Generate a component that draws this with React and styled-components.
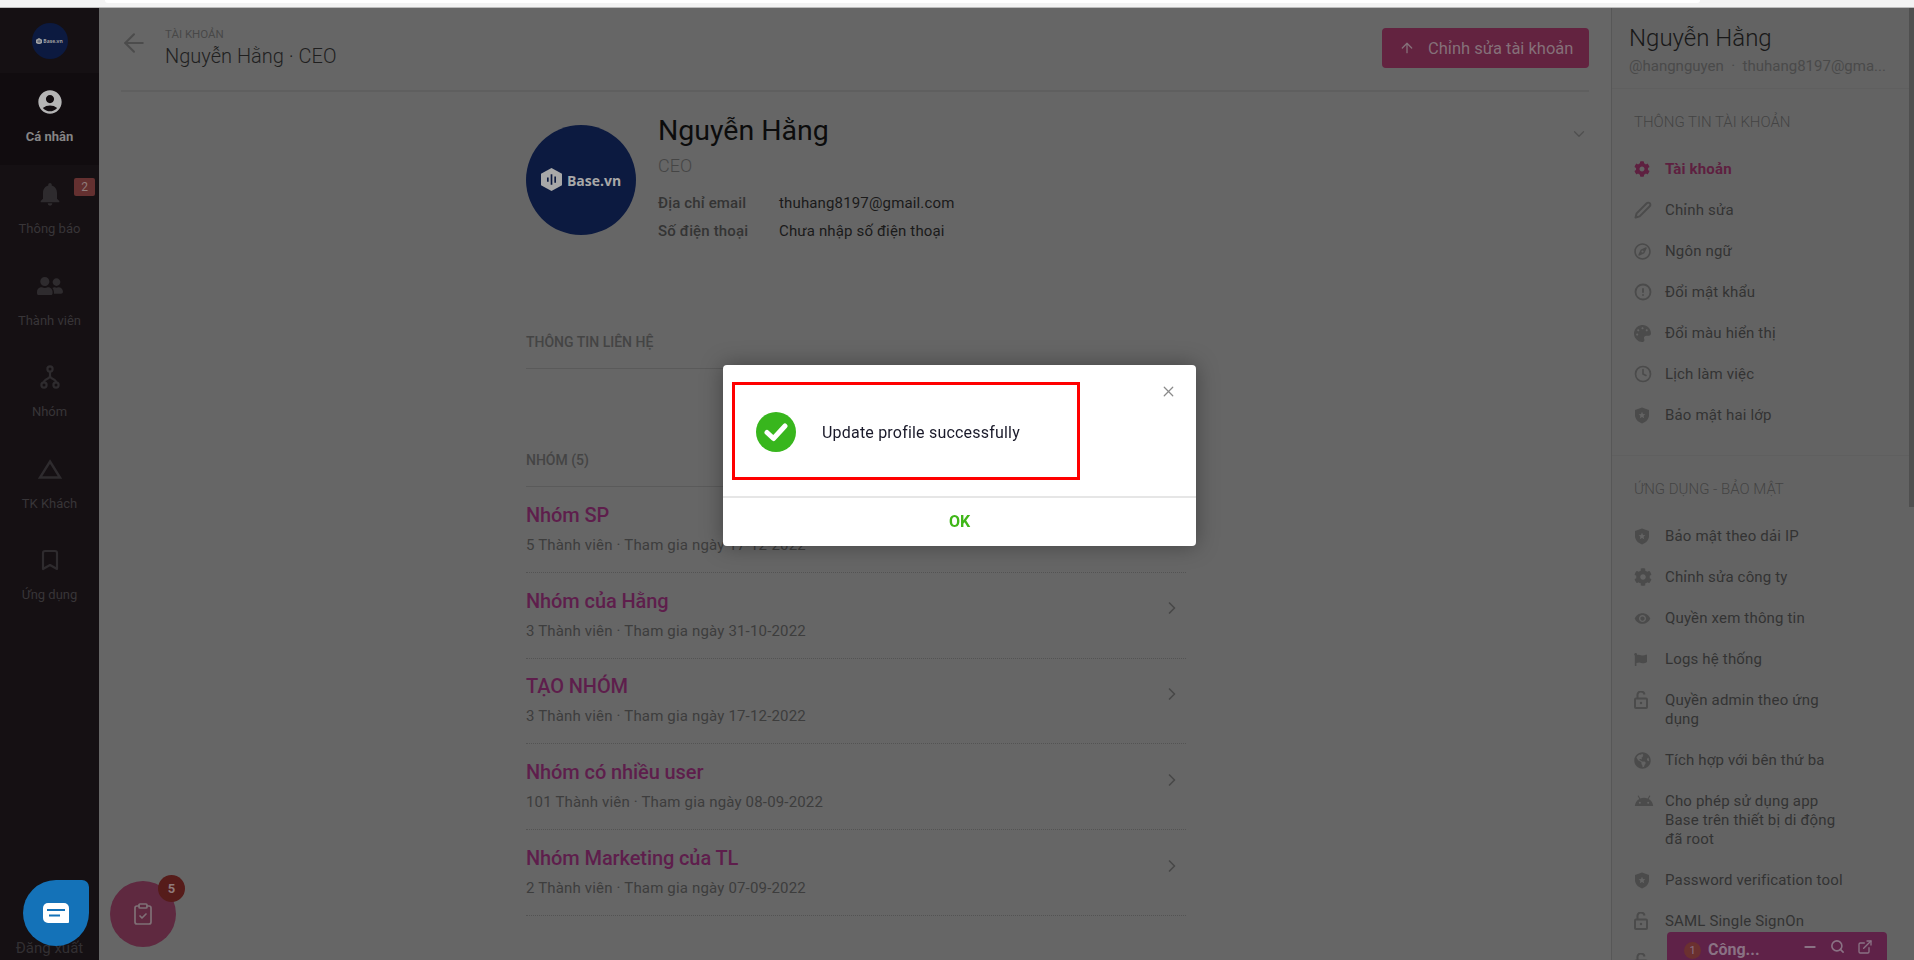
import styled, { createGlobalStyle } from 'styled-components'
import { ArrowLeft, ArrowUp, Bookmark, ChevronDown, ChevronRight, ClipboardCheck, ExternalLink, Minus, Search, X } from 'lucide-react'
import { FaCog, FaFlag, FaGlobeAmericas, FaPalette, FaRegCompass, FaUserFriends } from 'react-icons/fa'
import { FiAlertCircle, FiClock, FiEdit2 } from 'react-icons/fi'
import { MdAccountCircle, MdAndroid, MdNotifications, MdVisibility } from 'react-icons/md'

const GlobalStyle = createGlobalStyle`
    html, body {
        margin: 0;
        height: 100%;
        overflow: hidden;
        background: #666;
        font-family: Roboto, "Noto Sans", sans-serif;
    }

    * {
        box-sizing: border-box;
    }
`

const ShieldIcon = () => (
    <svg width="16" height="17" viewBox="0 0 16 17" fill="currentColor">
        <path d="M8 0.5 L15 3 V8 C15 12 12 15 8 16.5 C4 15 1 12 1 8 V3 Z" />
        <path fill="#636363" d="M8 4.8 l1 2.2 2.4.2-1.8 1.6.6 2.4L8 10l-2.2 1.2.6-2.4-1.8-1.6 2.4-.2z" />
    </svg>
)

const LockOpenIcon = () => (
    <svg width="14" height="18" viewBox="0 0 14 18" fill="none" stroke="currentColor" strokeWidth="2">
        <rect x="1" y="7.5" width="12" height="9.5" rx="1" />
        <path d="M3.5 7.5 V4.5 A3.5 3.5 0 0 1 10.5 3.5" />
        <circle cx="7" cy="12" r="1.2" fill="currentColor" stroke="none" />
    </svg>
)

const TreeIcon = () => (
    <svg width="20" height="24" viewBox="0 0 20 24" fill="none" stroke="currentColor" strokeWidth="2.2">
        <circle cx="10" cy="4" r="2.6" />
        <circle cx="4" cy="20" r="2.6" />
        <circle cx="16" cy="20" r="2.6" />
        <path d="M10 7 V11 M10 11 C10 14 4 14 4 17 M10 11 C10 14 16 14 16 17" />
    </svg>
)

const TriangleIcon = () => (
    <svg width="24" height="20" viewBox="0 0 24 20" fill="none" stroke="currentColor" strokeWidth="2.4">
        <path d="M12 2.5 L22 18.5 H2 Z" />
    </svg>
)

const HexIcon = ({ size, bar, fill }) => (
    <svg width={size} height={size * 1.1} viewBox="0 0 20 22">
        <path fill={fill} d="M10 0 L20 5.5 V16.5 L10 22 L0 16.5 V5.5 Z" />
        <path stroke={bar} strokeWidth="1.6" d="M6.5 9 V13 M10 6 V16 M13.5 8 V14" />
    </svg>
)

const navItems = [
    { label: 'Cá nhân', icon: <MdAccountCircle size={28} />, active: true },
    { label: 'Thông báo', icon: <MdNotifications size={28} />, badge: 2 },
    { label: 'Thành viên', icon: <FaUserFriends size={26} /> },
    { label: 'Nhóm', icon: <TreeIcon /> },
    { label: 'TK Khách', icon: <TriangleIcon /> },
    { label: 'Ứng dụng', icon: <Bookmark size={24} strokeWidth={2.2} /> },
]

const accountItems = [
    { label: 'Tài khoản', icon: <FaCog size={16} />, active: true },
    { label: 'Chỉnh sửa', icon: <FiEdit2 size={18} strokeWidth={2.6} /> },
    { label: 'Ngôn ngữ', icon: <FaRegCompass size={17} /> },
    { label: 'Đổi mật khẩu', icon: <FiAlertCircle size={18} strokeWidth={2.4} /> },
    { label: 'Đổi màu hiển thị', icon: <FaPalette size={17} /> },
    { label: 'Lịch làm việc', icon: <FiClock size={18} strokeWidth={2.2} /> },
    { label: 'Bảo mật hai lớp', icon: <ShieldIcon /> },
]

const appItems = [
    { label: 'Bảo mật theo dải IP', icon: <ShieldIcon /> },
    { label: 'Chỉnh sửa công ty', icon: <FaCog size={18} /> },
    { label: 'Quyền xem thông tin', icon: <MdVisibility size={17} /> },
    { label: 'Logs hệ thống', icon: <FaFlag size={13} /> },
    { label: 'Quyền admin theo ứng dụng', icon: <LockOpenIcon /> },
    { label: 'Tích hợp với bên thứ ba', icon: <FaGlobeAmericas size={17} /> },
    { label: 'Cho phép sử dụng app Base trên thiết bị di động đã root', icon: <MdAndroid size={20} /> },
    { label: 'Password verification tool', icon: <ShieldIcon /> },
    { label: 'SAML Single SignOn', icon: <LockOpenIcon /> },
    { label: '', icon: <LockOpenIcon /> },
]

const groups = [
    { name: 'Nhóm SP', meta: '5 Thành viên · Tham gia ngày 17-12-2022' },
    { name: 'Nhóm của Hằng', meta: '3 Thành viên · Tham gia ngày 31-10-2022' },
    { name: 'TẠO NHÓM', meta: '3 Thành viên · Tham gia ngày 17-12-2022' },
    { name: 'Nhóm có nhiều user', meta: '101 Thành viên · Tham gia ngày 08-09-2022' },
    { name: 'Nhóm Marketing của TL', meta: '2 Thành viên · Tham gia ngày 07-09-2022' },
]

const App = () => {
    return (
        <PageStyled>
            <GlobalStyle />
            <TopStrip><TopTab /></TopStrip>
            <Shell>
                <Sidebar>
                    <LogoArea>
                        <SmallLogo>
                            <HexIcon size={6} bar="#0c1a40" fill="#a0a0a0" />
                            <span>Base.vn</span>
                        </SmallLogo>
                    </LogoArea>
                    {navItems.map((item) => (
                        <NavItem key={item.label} $active={item.active}>
                            {item.icon}
                            <NavLabel $active={item.active}>{item.label}</NavLabel>
                            {item.badge ? <NavBadge>{item.badge}</NavBadge> : null}
                        </NavItem>
                    ))}
                    <Logout>Đăng xuất</Logout>
                </Sidebar>

                <Main>
                    <Header>
                        <BackArrow><ArrowLeft size={30} strokeWidth={1.6} /></BackArrow>
                        <HeaderTitle>
                            <small>TÀI KHOẢN</small>
                            <strong>Nguyễn Hằng · CEO</strong>
                        </HeaderTitle>
                        <EditButton>
                            <ArrowUp size={16} strokeWidth={2} />
                            Chỉnh sửa tài khoản
                        </EditButton>
                    </Header>

                    <Content>
                        <Profile>
                            <Avatar>
                                <HexIcon size={21} bar="#0c1a40" fill="#a8a8a8" />
                                <span>Base.vn</span>
                            </Avatar>
                            <ProfileInfo>
                                <ProfileName>Nguyễn Hằng</ProfileName>
                                <ProfileRole>CEO</ProfileRole>
                                <InfoRow><label>Địa chỉ email</label><span>thuhang8197@gmail.com</span></InfoRow>
                                <InfoRow><label>Số điện thoại</label><span>Chưa nhập số điện thoại</span></InfoRow>
                            </ProfileInfo>
                            <ProfileToggle><ChevronDown size={18} strokeWidth={1.6} /></ProfileToggle>
                        </Profile>

                        <SectionTitle $top={91}>THÔNG TIN LIÊN HỆ</SectionTitle>
                        <SectionTitle $top={77}>NHÓM (5)</SectionTitle>

                        {groups.map((group) => (
                            <GroupRow key={group.name}>
                                <div>
                                    <GroupName>{group.name}</GroupName>
                                    <GroupMeta>{group.meta}</GroupMeta>
                                </div>
                                <ChevronRight size={20} strokeWidth={2} />
                            </GroupRow>
                        ))}
                    </Content>
                </Main>

                <RightPanel>
                    <PanelHead>
                        <h2>Nguyễn Hằng</h2>
                        <p>@hangnguyen &nbsp;·&nbsp; thuhang8197@gma...</p>
                    </PanelHead>
                    <PanelGroup>
                        <PanelTitle>THÔNG TIN TÀI KHOẢN</PanelTitle>
                        {accountItems.map((item) => (
                            <PanelItem key={item.label} $active={item.active}>
                                <PanelIcon $active={item.active}>{item.icon}</PanelIcon>
                                <span>{item.label}</span>
                            </PanelItem>
                        ))}
                    </PanelGroup>
                    <PanelGroup $divided>
                        <PanelTitle>ỨNG DỤNG - BẢO MẬT</PanelTitle>
                        {appItems.map((item, i) => (
                            <PanelItem key={i}>
                                <PanelIcon>{item.icon}</PanelIcon>
                                <span>{item.label}</span>
                            </PanelItem>
                        ))}
                    </PanelGroup>
                    <ScrollThumb />
                </RightPanel>
            </Shell>

            <ChatBubble>
                <svg width="26" height="20" viewBox="0 0 26 20">
                    <path fill="#fff" d="M5 0 H21 A5 5 0 0 1 26 5 V19 A1 1 0 0 1 25 20 H5 A5 5 0 0 1 0 15 V5 A5 5 0 0 1 5 0 Z" />
                    <path fill="#1472b8" d="M4 6 H22 V8 H4 Z M6 11.5 H17 V13.5 H6 Z" />
                </svg>
            </ChatBubble>
            <TaskBubble>
                <ClipboardCheck size={24} strokeWidth={1.7} />
                <TaskCount>5</TaskCount>
            </TaskBubble>
            <ChatDock>
                <DockCount>1</DockCount>
                <DockTitle>Công...</DockTitle>
                <DockIcons>
                    <Minus size={16} strokeWidth={3} />
                    <Search size={15} strokeWidth={2.6} />
                    <ExternalLink size={16} strokeWidth={2} />
                </DockIcons>
            </ChatDock>

            <Modal>
                <ModalBody>
                    <SuccessIcon>
                        <svg width="24" height="20" viewBox="0 0 24 20" fill="none" stroke="#fff" strokeWidth="5" strokeLinecap="round" strokeLinejoin="round">
                            <path d="M3 10.5 L9.5 16.5 L21 4" />
                        </svg>
                    </SuccessIcon>
                    <ModalText>Update profile successfully</ModalText>
                    <CloseButton><X size={17} strokeWidth={1.7} /></CloseButton>
                    <RedMark />
                </ModalBody>
                <ModalFooter>OK</ModalFooter>
            </Modal>
        </PageStyled>
    )
}

const PageStyled = styled.div`
    width: 100%;
    height: 100vh;
    display: flex;
    flex-direction: column;
    overflow: hidden;
`

const TopStrip = styled.div`
    flex: none;
    height: 8px;
    padding: 0 214px 0 105px;
    background: #f3f3f3;
    border-bottom: 1px solid #bcbcbc;
`

const TopTab = styled.div`
    height: 3px;
    background: #fff;
    border-radius: 0 0 10px 10px;
`

const Shell = styled.div`
    flex: 1;
    min-height: 0;
    display: flex;
`

const Sidebar = styled.nav`
    flex: none;
    width: 99px;
    display: flex;
    flex-direction: column;
    background: #151013;
`

const LogoArea = styled.div`
    flex: none;
    height: 65px;
    padding-top: 15px;
    display: flex;
    justify-content: center;
`

const SmallLogo = styled.div`
    width: 36px;
    height: 36px;
    border-radius: 50%;
    background: #0c1a40;
    display: flex;
    align-items: center;
    justify-content: center;
    gap: 1px;
    color: #a0a0a0;
    font-family: "Open Sans", sans-serif;
    font-size: 5px;
    font-weight: 700;
`

const NavItem = styled.div`
    position: relative;
    flex: none;
    height: ${(p) => (p.$active ? '92px' : '91.6px')};
    padding-top: 14px;
    display: flex;
    flex-direction: column;
    align-items: center;
    background: ${(p) => (p.$active ? '#110c0f' : 'transparent')};
    color: ${(p) => (p.$active ? '#b5b5b5' : '#2e2b2e')};

    svg {
        height: 30px;
    }
`

const NavLabel = styled.span`
    margin-top: 12px;
    font-size: 13px;
    line-height: 16px;
    font-weight: ${(p) => (p.$active ? 700 : 400)};
    color: ${(p) => (p.$active ? '#858585' : '#383538')};
`

const NavBadge = styled.span`
    position: absolute;
    top: 13px;
    right: 4px;
    width: 21px;
    height: 18px;
    border-radius: 2px;
    background: #643030;
    color: #8f7c7b;
    font-size: 12px;
    line-height: 18px;
    text-align: center;
`

const Logout = styled.div`
    margin-top: auto;
    padding-bottom: 3px;
    text-align: center;
    font-size: 15px;
    line-height: 18px;
    color: #322f32;
`

const Main = styled.main`
    flex: 1;
    min-width: 0;
    padding: 0 22px;
    background: #666;
`

const Header = styled.header`
    height: 84px;
    padding-bottom: 9px;
    display: flex;
    align-items: center;
    border-bottom: 2px solid #5f5f5f;
`

const BackArrow = styled.div`
    flex: none;
    width: 46px;
    height: 30px;
    margin: -3px 0 0 -2px;
    color: #4c4c4c;
`

const HeaderTitle = styled.div`
    display: flex;
    flex-direction: column;
    margin-top: 5px;

    small {
        font-size: 11.5px;
        line-height: 14px;
        color: #484848;
    }

    strong {
        margin-top: 3px;
        font-size: 20px;
        line-height: 24px;
        font-weight: 300;
        color: #1f1f1f;
    }
`

const EditButton = styled.div`
    margin: 7px 0 0 auto;
    width: 207px;
    height: 40px;
    padding-left: 17px;
    display: flex;
    align-items: center;
    gap: 13px;
    border-radius: 4px;
    background: #632340;
    color: #857079;
    font-size: 16.5px;
`

const Content = styled.div`
    width: 660px;
    margin-left: 405px;
`

const Profile = styled.section`
    position: relative;
    display: flex;
    gap: 22px;
    height: 145px;
    padding-top: 33px;
`

const Avatar = styled.div`
    flex: none;
    width: 110px;
    height: 110px;
    border-radius: 50%;
    background: #0c1a40;
    display: flex;
    align-items: center;
    justify-content: center;
    gap: 5px;
    color: #a8a8a8;
    font-family: "Open Sans", sans-serif;
    font-size: 14px;
    font-weight: 700;
`

const ProfileInfo = styled.div`
    margin-top: -11px;
`

const ProfileName = styled.div`
    font-size: 28.5px;
    line-height: 34px;
    color: #0c0c0c;
`

const ProfileRole = styled.div`
    margin-top: 7px;
    margin-bottom: 12px;
    font-size: 18px;
    line-height: 22px;
    font-weight: 300;
    color: #454545;
`

const InfoRow = styled.div`
    display: flex;
    height: 28px;
    align-items: center;
    font-size: 15px;
    letter-spacing: 0.15px;

    label {
        width: 121px;
        font-weight: 500;
        color: #343434;
    }

    span {
        color: #1a1a1a;
    }
`

const ProfileToggle = styled.div`
    position: absolute;
    top: 33px;
    left: 1044px;
    color: #4f4f4f;
`

const SectionTitle = styled.h3`
    margin: ${(p) => p.$top}px 0 0;
    height: 41px;
    padding-top: 5px;
    font-size: 14px;
    line-height: 18px;
    font-weight: 500;
    color: #444;
    border-bottom: 1px solid #5a5a5a;
`

const GroupRow = styled.div`
    height: 85.8px;
    padding: 0 4px 3px 0;
    display: flex;
    justify-content: space-between;
    align-items: center;
    border-bottom: 1px dotted #535353;
    color: #484848;

    > svg {
        margin-bottom: 11px;
    }
`

const GroupName = styled.div`
    font-size: 20px;
    line-height: 26px;
    font-weight: 500;
    letter-spacing: -0.1px;
    color: #5e1e4c;
`

const GroupMeta = styled.div`
    margin-top: 8px;
    font-size: 15px;
    line-height: 18px;
    letter-spacing: 0.17px;
    color: #3d3d3d;
`

const RightPanel = styled.aside`
    position: relative;
    flex: none;
    width: 303px;
    background: #636363;
    border-left: 1px solid #575757;
    overflow: hidden;
`

const PanelHead = styled.div`
    height: 81px;
    padding: 15px 20px 0 17px;
    border-bottom: 1px solid #5f5f5f;

    h2 {
        margin: 0;
        font-size: 24px;
        line-height: 30px;
        font-weight: 300;
        color: #181818;
    }

    p {
        margin: 3px 0 0;
        font-size: 15px;
        line-height: 20px;
        white-space: nowrap;
        color: #4a4a4a;
    }
`

const PanelGroup = styled.div`
    padding: 23px 0 ${(p) => (p.$divided ? '0' : '8px')} 22px;
    border-top: ${(p) => (p.$divided ? '1px solid #5f5f5f' : 'none')};
`

const PanelTitle = styled.h4`
    margin: 0 0 28px;
    font-size: 15px;
    line-height: 20px;
    font-weight: 300;
    color: #444;
`

const PanelItem = styled.div`
    display: flex;
    width: 212px;
    min-height: 19px;
    margin-bottom: 22px;
    font-size: 15px;
    line-height: 19px;
    letter-spacing: 0.17px;
    font-weight: ${(p) => (p.$active ? 700 : 400)};
    color: ${(p) => (p.$active ? '#5e2040' : '#333')};

    span {
        flex: 1;
    }
`

const PanelIcon = styled.span`
    flex: none !important;
    width: 31px;
    height: 18px;
    color: ${(p) => (p.$active ? '#5e2040' : '#4b4b4b')};
    display: flex;
    align-items: center;
`

const ScrollThumb = styled.div`
    position: absolute;
    top: 0;
    right: 0;
    width: 5px;
    height: 499px;
    background: #4f4f4f;
`

const ChatBubble = styled.div`
    position: fixed;
    left: 23px;
    top: 880px;
    width: 66px;
    height: 66px;
    display: flex;
    align-items: center;
    justify-content: center;
    border-radius: 50% 7px 50% 50%;
    background: #1472b8;
`

const TaskBubble = styled.div`
    position: fixed;
    left: 110px;
    top: 881px;
    width: 66px;
    height: 66px;
    display: flex;
    align-items: center;
    justify-content: center;
    border-radius: 50%;
    background: #5f2940;
    color: #7f7076;
`

const TaskCount = styled.span`
    position: absolute;
    top: -6px;
    right: -9px;
    width: 27px;
    height: 27px;
    border-radius: 50%;
    background: #561c1a;
    color: #8f7a79;
    font-size: 13px;
    font-weight: 700;
    line-height: 27px;
    text-align: center;
`

const ChatDock = styled.div`
    position: fixed;
    left: 1667px;
    top: 932px;
    width: 220px;
    height: 28px;
    padding: 7px 14px 0 17px;
    display: flex;
    align-items: flex-start;
    border-radius: 4px 4px 0 0;
    background: #5f2248;
    color: #8a7284;
`

const DockCount = styled.span`
    width: 17px;
    height: 17px;
    margin-top: 3px;
    border-radius: 50%;
    background: #6b3030;
    font-size: 11px;
    line-height: 17px;
    text-align: center;
`

const DockTitle = styled.span`
    margin-left: 7px;
    font-size: 16px;
    line-height: 22px;
    font-weight: 700;
`

const DockIcons = styled.span`
    margin-left: auto;
    display: flex;
    gap: 12px;
`

const Modal = styled.div`
    position: fixed;
    left: 723px;
    top: 365px;
    width: 473px;
    height: 181px;
    border-radius: 4px;
    background: #fff;
    box-shadow: 0 0 22px rgba(0, 0, 0, 0.35);
    display: flex;
    flex-direction: column;
`

const ModalBody = styled.div`
    position: relative;
    height: 133px;
    padding: 3px 0 0 33px;
    display: flex;
    align-items: center;
    border-bottom: 2px solid #e6e6e6;
`

const SuccessIcon = styled.div`
    flex: none;
    width: 40px;
    height: 40px;
    border-radius: 50%;
    background: #38b61d;
    display: flex;
    align-items: center;
    justify-content: center;
`

const ModalText = styled.div`
    margin-left: 26px;
    font-size: 16px;
    letter-spacing: 0.2px;
    color: #1a1a2a;
`

const CloseButton = styled.div`
    position: absolute;
    top: 18px;
    right: 19px;
    color: #8a8a8a;
`

const RedMark = styled.div`
    position: absolute;
    left: 9px;
    top: 17px;
    width: 348px;
    height: 98px;
    border: 3px solid #f00;
`

const ModalFooter = styled.div`
    flex: 1;
    padding-bottom: 2px;
    display: flex;
    align-items: center;
    justify-content: center;
    font-size: 16px;
    font-weight: 700;
    color: #3fb618;
`

export default App
